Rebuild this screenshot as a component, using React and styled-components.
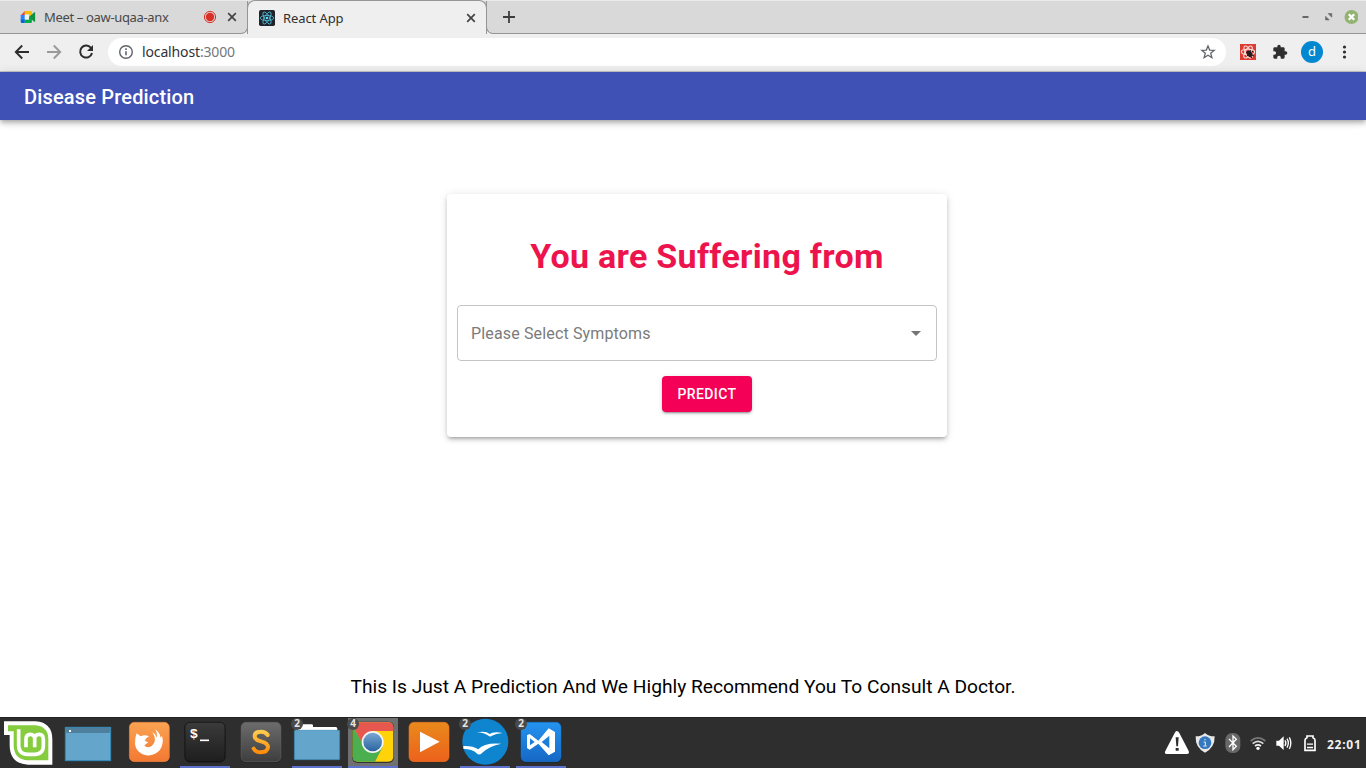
import React from "react";
import styled, { createGlobalStyle } from "styled-components";

const GlobalStyle = createGlobalStyle`
  *, *::before, *::after { box-sizing: border-box; }
  body { margin: 0; background: #fff; overflow: hidden; }
  svg { display: block; flex: none; }
`;

const uiFont = `"Noto Sans", "Open Sans", sans-serif`;

const Desktop = styled.div`
  width: 1366px;
  height: 768px;
  display: flex;
  flex-direction: column;
  background: #fff;
  font-family: Roboto, sans-serif;
`;

/* ---------- browser ---------- */
const TabStrip = styled.div`
  height: 34px;
  flex: none;
  display: flex;
  background: #d9d9d9;
  border-top: 1px solid #e9e9e9;
`;

const StripFill = styled.div`
  flex: ${(p) => (p.$grow ? 1 : "none")};
  display: flex;
  align-items: center;
  border: 0 solid #959595;
  border-bottom-width: 1px;
  border-left-width: ${(p) => (p.$grow ? "1px" : 0)};
  border-right-width: ${(p) => (p.$grow ? 0 : "1px")};
  border-bottom-left-radius: ${(p) => (p.$grow ? "7px" : 0)};
  border-bottom-right-radius: ${(p) => (p.$grow ? 0 : "7px")};
`;

const StripBack = styled.div`
  display: flex;
  background: #efefef;
  margin-left: ${(p) => (p.$grow ? "-1px" : 0)};
  flex: ${(p) => (p.$grow ? 1 : "none")};
  & > div { background: #d9d9d9; }
`;

const InactiveTab = styled(StripFill)`
  width: 248px;
  padding-left: 20px;
`;

const ActiveTab = styled.div`
  position: relative;
  width: 240px;
  margin: -1px 0 0 -1px;
  padding: 0 0 0 11px;
  display: flex;
  align-items: center;
  background: #efefef;
  border: 1px solid #959595;
  border-bottom: 0;
  border-radius: 8px 8px 0 0;
  clip-path: inset(0);
`;

const TabTitle = styled.span`
  font: 13px/18px ${uiFont};
  letter-spacing: ${(p) => p.$spacing || "0"};
  color: ${(p) => (p.$active ? "#303030" : "#494949")};
  width: ${(p) => p.$width}px;
  margin-left: 8px;
  white-space: nowrap;
`;

const WindowButtons = styled.div`
  margin-left: auto;
  display: flex;
  align-items: center;
  padding-right: 8px;
`;

const Toolbar = styled.div`
  height: 38px;
  flex: none;
  display: flex;
  align-items: center;
  background: #efefef;
  border-bottom: 1px solid #c5c5c5;
  padding: 0 0 1px 14px;
`;

const NavButtons = styled.div`
  display: flex;
  gap: 16px;
  width: 94px;
`;

const AddressBar = styled.div`
  width: 1118px;
  height: 28px;
  border-radius: 14px;
  background: #fff;
  display: flex;
  align-items: center;
  padding: 0 10px;
`;

const Address = styled.span`
  flex: 1;
  margin-left: 8px;
  font: 14px/20px ${uiFont};
  letter-spacing: -0.14px;
  color: #303235;
`;

const Port = styled.span`
  color: #74787c;
`;

const Actions = styled.div`
  flex: 1;
  display: flex;
  align-items: center;
  gap: 16px;
  padding-left: 14px;
`;

const Avatar = styled.div`
  width: 22px;
  height: 22px;
  margin: 0 -2px 0 -3px;
  border-radius: 50%;
  background: #0288d1;
  color: #fff;
  font: 13px/21px ${uiFont};
  text-align: center;
`;

/* ---------- application ---------- */
const AppBar = styled.header`
  height: 48px;
  flex: none;
  display: flex;
  align-items: center;
  padding: 2px 24px 0;
  background: #3f51b5;
  color: #fff;
  font-size: 20px;
  font-weight: 500;
  letter-spacing: 0.17px;
  box-shadow: 0 2px 4px -1px rgba(0, 0, 0, 0.2), 0 4px 5px rgba(0, 0, 0, 0.14), 0 1px 10px rgba(0, 0, 0, 0.12);
`;

const Page = styled.main`
  flex: 1;
  display: flex;
  flex-direction: column;
  align-items: center;
`;

const Card = styled.section`
  width: 500px;
  height: 243px;
  margin: 74px 0 0 28px;
  padding: 42px 10px 0;
  border-radius: 4px;
  background: #fff;
  box-shadow: 0 3px 3px -2px rgba(0, 0, 0, 0.2), 0 3px 4px rgba(0, 0, 0, 0.14), 0 1px 8px rgba(0, 0, 0, 0.12);
  display: flex;
  flex-direction: column;
`;

const Heading = styled.h1`
  margin: 0 0 29px 20px;
  height: 40px;
  line-height: 40px;
  font-size: 34px;
  font-weight: 700;
  letter-spacing: 0.28px;
  color: #ed144d;
  text-align: center;
  white-space: nowrap;
`;

const Select = styled.div`
  height: 56px;
  flex: none;
  border: 1px solid #c4c4c4;
  border-radius: 4px;
  display: flex;
  align-items: center;
  justify-content: space-between;
  padding: 0 8px 0 13px;
  font-size: 16px;
  letter-spacing: 0.15px;
  color: #7b7b7b;
`;

const PredictButton = styled.button`
  width: 90px;
  height: 36px;
  margin: 15px 0 0 205px;
  padding: 0;
  border: 0;
  border-radius: 4px;
  background: #f50057;
  color: #fff;
  font: 500 14px/24px Roboto, sans-serif;
  letter-spacing: 0.4px;
  box-shadow: 0 3px 1px -2px rgba(0, 0, 0, 0.2), 0 2px 2px rgba(0, 0, 0, 0.14), 0 1px 5px rgba(0, 0, 0, 0.12);
`;

const Disclaimer = styled.p`
  margin: auto 0 18px;
  font-size: 19.2px;
  line-height: 24px;
  color: #000;
`;

/* ---------- taskbar ---------- */
const Taskbar = styled.footer`
  height: 51px;
  flex: none;
  display: flex;
  background: #2e2e2e;
  border-top: 1px solid #242424;
`;

const Launchers = styled.div`
  display: flex;
  gap: 6px;
`;

const Launcher = styled.div`
  position: relative;
  width: ${(p) => p.$width || 50}px;
  margin-right: ${(p) => p.$after || 0}px;
  background: ${(p) => (p.$focused ? "#707070" : "transparent")};
  border-bottom: ${(p) => (p.$open ? "2px solid #5d72cc" : "0")};
  & > svg { margin-top: -1px; }
`;

const Count = styled.span`
  position: absolute;
  left: -1px;
  top: 0;
  width: 12px;
  height: 12px;
  border-radius: 50%;
  background: #4a4a4a;
  color: #e5e5e5;
  font: 700 10px/11px ${uiFont};
  text-align: center;
`;

const Tray = styled.div`
  margin-left: auto;
  display: flex;
`;

const Clock = styled.time`
  width: 39px;
  padding-top: 17px;
  color: #f2f2f2;
  font: 700 12px/20px ${uiFont};
  letter-spacing: 0.75px;
`;

const Close = () => (
  <svg width="10" height="10" viewBox="0 0 10 10" stroke="#444" strokeWidth="1.7">
    <path d="M1.2 1.2l7.6 7.6M8.8 1.2L1.2 8.8" />
  </svg>
);

const MeetLogo = () => (
  <svg width="16" height="16" viewBox="0 0 16 16">
    <path d="M.7 6.5L4.8 2v4.5z" fill="#ea4335" />
    <path d="M4.8 2h6.1q1 0 1 1v3.2L9 8V5.5H4.8z" fill="#fbbc04" />
    <path d="M.7 6h4.1v5H.7z" fill="#2684fc" />
    <path d="M.7 10.5h4.1V14H2q-1.3 0-1.3-1.3z" fill="#0066da" />
    <path d="M4.8 10.5H9V8l2.9-1.8V13q0 1-1 1H4.8z" fill="#00ac47" />
    <path d="M4.8 5.5H9v5H4.8z" fill="#eef2f3" />
    <path d="M9 8l5.2-4.7q.9-.5.9.5v8.4q0 1-.9.5z" fill="#13913f" />
  </svg>
);

const ReactLogo = () => (
  <svg width="16" height="16" viewBox="0 0 16 16">
    <rect width="16" height="16" rx="1.7" fill="#20232a" />
    <g fill="none" stroke="#52c1dc" strokeWidth=".8">
      <ellipse cx="8" cy="8" rx="6.8" ry="2.6" />
      <ellipse cx="8" cy="8" rx="6.8" ry="2.6" transform="rotate(60 8 8)" />
      <ellipse cx="8" cy="8" rx="6.8" ry="2.6" transform="rotate(120 8 8)" />
    </g>
    <circle cx="8" cy="8" r="1.3" fill="#61dafb" />
  </svg>
);

const DevtoolsIcon = () => (
  <svg width="16" height="16" viewBox="0 0 16 16">
    <rect width="16" height="16" fill="#dc3c31" />
    <g fill="none" stroke="#f8dcda" strokeWidth="1.1">
      <ellipse cx="8" cy="8" rx="6.7" ry="2.7" />
      <ellipse cx="8" cy="8" rx="6.7" ry="2.7" transform="rotate(60 8 8)" />
      <ellipse cx="8" cy="8" rx="6.7" ry="2.7" transform="rotate(120 8 8)" />
    </g>
    <ellipse cx="9.5" cy="9.8" rx="2.5" ry="3.5" transform="rotate(-35 9.5 9.8)" fill="#251b1a" />
    <path d="M6 8l2 1M7 12l1-1M10 6l1 2M12 8l1-1M12 11l2 1M10 12l2 2" stroke="#251b1a" />
  </svg>
);

/* Dock drawings are on a grid of three units per pixel. */
const Dock = ({ x, width = 50, children }) => (
  <svg width={width} height="51" viewBox={`${x} 21 ${width * 3} 153`}>{children}</svg>
);

const Tile = ({ x, fill, edge }) => (
  <g>
    <rect x={x - 1} y="36" width="124" height="122" rx="17" fill="#181818" opacity=".65" />
    <rect x={x + 1} y="37" width="120" height="118" rx="15" fill={fill} stroke={edge} strokeWidth="2" />
  </g>
);

const Gradient = ({ id, from, to }) => (
  <linearGradient id={id} x1="0" y1="0" x2="0" y2="1">
    <stop stopColor={from} />
    <stop offset="1" stopColor={to} />
  </linearGradient>
);

const Gradients = () => (
  <defs>
    <Gradient id="orange" from="#fba352" to="#f37932" />
    <Gradient id="black" from="#3b3b3b" to="#1e1e1e" />
    <Gradient id="gray" from="#6c6c6c" to="#3e3e3e" />
    <Gradient id="gold" from="#ffca4c" to="#ff8d0b" />
    <Gradient id="play" from="#e98a1c" to="#ed611c" />
    <Gradient id="code" from="#2494ef" to="#1767c5" />
    <Gradient id="globe" from="#78a7d4" to="#2a649f" />
  </defs>
);

const BrowserChrome = () => (
  <>
    <TabStrip>
      <StripBack>
        <InactiveTab>
          <MeetLogo />
          <TabTitle $width={159} $spacing="-0.34px">Meet – oaw-uqaa-anx</TabTitle>
          <svg width="24" height="14" viewBox="0 0 24 14">
            <circle cx="7" cy="7" r="5.6" fill="none" stroke="#d93025" strokeWidth="1" />
            <circle cx="7" cy="7" r="4.2" fill="#d93025" />
          </svg>
          <Close />
        </InactiveTab>
      </StripBack>
      <ActiveTab>
        <ReactLogo />
        <TabTitle $active $width={183} $spacing="-0.1px">React App</TabTitle>
        <Close />
      </ActiveTab>
      <StripBack $grow>
        <StripFill $grow>
          <svg width="44" height="14" viewBox="0 0 44 14" stroke="#3d3d3d" strokeWidth="1.8">
            <path d="M22 1v12M16 7h12" />
          </svg>
          <WindowButtons>
            <svg width="60" height="16" viewBox="0 0 60 16">
              <path d="M4.5 8h6" stroke="#666" strokeWidth="2" />
              <path d="M30 4.5h3.8v3.8zM27.5 7.2v3.8h3.8z" fill="#666" stroke="#666" strokeWidth=".5" />
              <circle cx="53.5" cy="8" r="7" fill="#92b372" />
              <path d="M50.8 5.3l5.4 5.4m0-5.4l-5.4 5.4" stroke="#fff" strokeWidth="2.3" />
            </svg>
          </WindowButtons>
        </StripFill>
      </StripBack>
    </TabStrip>
    <Toolbar>
      <NavButtons>
        <svg width="16" height="16" viewBox="0 0 16 16" fill="none" stroke="#2d2d2d" strokeWidth="1.9">
          <path d="M15 8H2M8.2 1.5L1.8 8l6.4 6.5" />
        </svg>
        <svg width="16" height="16" viewBox="0 0 16 16" fill="none" stroke="#999" strokeWidth="1.9">
          <path d="M1 8h13M7.8 1.5L14.2 8l-6.4 6.5" />
        </svg>
        <svg width="16" height="16" viewBox="0 0 16 16" fill="none" stroke="#2d2d2d" strokeWidth="2">
          <path d="M13.2 4.3A6 6 0 1 0 14 9" />
          <path d="M15 1v6H9z" fill="#2d2d2d" stroke="none" />
        </svg>
      </NavButtons>
      <AddressBar>
        <svg width="16" height="16" viewBox="0 0 16 16" fill="none" stroke="#5f6368" strokeWidth="1.4">
          <circle cx="8" cy="8" r="6.3" />
          <path d="M8 7.2v4.1M8 4.3v1.6" strokeWidth="1.6" />
        </svg>
        <Address>localhost<Port>:3000</Port></Address>
        <svg width="16" height="16" viewBox="0 0 16 16" fill="none" stroke="#5f6368" strokeWidth="1.3">
          <path d="M8 1.9l1.7 4.2 4.5.3-3.5 2.9 1.2 4.4L8 11.3l-3.9 2.4 1.2-4.4-3.5-2.9 4.5-.3z" />
        </svg>
      </AddressBar>
      <Actions>
        <DevtoolsIcon />
        <svg width="16" height="16" viewBox="0 0 24 24" fill="#2f2f2f">
          <path d="M20.5 11H19V7c0-1.1-.9-2-2-2h-4V3.5a2.5 2.5 0 0 0-5 0V5H4c-1.1 0-2 .9-2 2v3.8h1.5a2.7 2.7 0 0 1 0 5.4H2V20c0 1.1.9 2 2 2h3.8v-1.5a2.7 2.7 0 0 1 5.4 0V22H17c1.1 0 2-.9 2-2v-4h1.5a2.5 2.5 0 0 0 0-5z" />
        </svg>
        <Avatar>d</Avatar>
        <svg width="16" height="16" viewBox="0 0 16 16" fill="#2d2d2d">
          <circle cx="7.5" cy="3" r="1.6" /><circle cx="7.5" cy="8" r="1.6" /><circle cx="7.5" cy="13" r="1.6" />
        </svg>
      </Actions>
    </Toolbar>
  </>
);

const DockBar = () => (
  <Taskbar>
    <Launchers>
      <Launcher $width={57}>
        <Dock x={0} width={57}>
          <Gradients />
          <path d="M12 34H107Q157 38 157 88V164H84Q29 161 29 105V75H12Z" fill="#fff" />
          <path d="M24 46H106Q145 50 145 88V151H84Q41 149 41 105V64H24Z" fill="#85cd3f" />
          <path d="M56 58V106Q56 133 83 133H107Q130 131 130 109V88Q130 73 117 73Q104 73 104 87V112M104 87Q104 73 91 73Q78 73 78 87V112" fill="none" stroke="#fff" strokeWidth="11" />
        </Dock>
      </Launcher>
      <Launcher $width={50} $after={5}>
        <Dock x={189}>
          <rect x="196" y="52" width="136" height="100" fill="#64a5cb" stroke="#318cba" strokeWidth="3" />
          <path d="M197 53h134v11q0 5-6 5H203q-6 0-6-5z" fill="#4e7f9c" />
          <rect x="207" y="60" width="6" height="6" fill="#fff" />
        </Dock>
      </Launcher>
      <Launcher>
        <Dock x={372}>
          <Tile x={387} fill="url(#orange)" edge="#e98448" />
          <path d="M410 70L422 79Q434 73 447 79Q437 84 434 92L445 97L433 106Q441 117 456 107Q473 91 457 66Q468 72 471 83Q473 70 466 58Q480 69 482 83L486 77Q493 101 479 121Q463 139 438 136Q408 129 405 103Q404 84 410 70Z" fill="#fff" />
        </Dock>
      </Launcher>
      <Launcher $open>
        <Dock x={12}>
          <Tile x={26} fill="url(#black)" edge="#111" />
          <text x="41" y="84" fontFamily="Liberation Mono" fontWeight="700" fontSize="41" fill="#fff">$</text>
          <path d="M72 91h27" stroke="#fff" strokeWidth="5" />
        </Dock>
      </Launcher>
      <Launcher>
        <Dock x={180}>
          <Tile x={194} fill="url(#gray)" edge="#626262" />
          <path d="M275 75Q268 65 255 65Q236 65 236 79Q236 89 255 94Q276 99 276 112Q274 127 254 127Q239 127 233 116" fill="none" stroke="url(#gold)" strokeWidth="12" strokeLinecap="round" />
        </Dock>
      </Launcher>
      <Launcher $open>
        <Dock x={348}>
          <path d="M359 62V43h48q4 0 4 4v4h68q5 0 5 5v10H359z" fill="#fff" />
          <rect x="355" y="61" width="136" height="88" rx="2" fill="#64a5cb" stroke="#3389b4" strokeWidth="2" />
        </Dock>
        <Count>2</Count>
      </Launcher>
      <Launcher $open $focused>
        <Dock x={24}>
          <clipPath id="chromeTile"><rect x="38" y="37" width="122" height="118" rx="15" /></clipPath>
          <rect x="36" y="35" width="126" height="124" rx="17" fill="#333" />
          <g clipPath="url(#chromeTile)">
            <path d="M36 35h128v125H36z" fill="#ffd20a" />
            <path d="M36 44L80 121L128 111L103 159H36z" fill="#4baf4f" />
            <path d="M36 35h126v28H98L66 98L38 48z" fill="#e65750" />
          </g>
          <circle cx="98" cy="96" r="33" fill="#f5f5f5" />
          <circle cx="98" cy="96" r="28" fill="url(#globe)" />
        </Dock>
        <Count>4</Count>
      </Launcher>
      <Launcher>
        <Dock x={192}>
          <Tile x={206} fill="url(#play)" edge="#ef7622" />
          <path d="M240 65L299 95L240 127z" fill="#fff" />
        </Dock>
      </Launcher>
      <Launcher $open>
        <Dock x={360}>
          <circle cx="436" cy="95" r="69" fill="#0f85d0" />
          <path d="M410 67Q438 61 449 72Q460 64 488 69Q467 71 454 78Q452 81 447 78Q432 68 410 67ZM370 108Q399 107 415 118Q433 97 484 101Q447 108 426 129Q417 138 409 129Q397 117 370 116Z" fill="#fff" />
        </Dock>
        <Count>2</Count>
      </Launcher>
      <Launcher $open>
        <Dock x={528}>
          <Tile x={542} fill="url(#code)" edge="#1779cf" />
          <path d="M561 76L569 72L595 92L626 55L645 66V125L626 136L595 101L569 119L561 114ZM570 85V106L584 96ZM628 77L605 96L628 115Z" fill="#fff" fillRule="evenodd" />
        </Dock>
        <Count>2</Count>
      </Launcher>
    </Launchers>
    <Tray>
      <svg width="165" height="51" viewBox="36 21 495 153" style={{ marginTop: -1 }}>
        <path d="M80 63Q85 63 88 69L116 123Q119 132 111 132H50Q42 132 46 123L74 69Q77 63 80 63z" fill="#fff" />
        <path d="M77 82h9l-2 27h-5zM77 114h9v8h-9z" fill="#2e2e2e" />
        <path d="M165 69Q177 80 194 79Q195 113 165 128Q135 113 137 79Q153 80 165 69z" fill="#e8e8e8" />
        <circle cx="165" cy="98" r="19" fill="#3479bf" />
        <path d="M165 87v4M161 96h5v11M160 108h10" stroke="#eee" strokeWidth="3" fill="none" />
        <rect x="226" y="69" width="45" height="60" rx="20" fill="#686868" />
        <path d="M237 87L259 109L249 119V78L259 88L237 111" fill="none" stroke="#fff" strokeWidth="4" />
        <g fill="none" strokeWidth="5">
          <path d="M302 93Q324 74 346 93" stroke="#777" />
          <path d="M308 101Q324 87 340 101" stroke="#ddd" />
          <path d="M315 108Q324 101 333 108" stroke="#f1f1f1" />
        </g>
        <circle cx="324" cy="115" r="5" fill="#fff" />
        <path d="M379 92h8l14-13v41l-14-13h-8z" fill="#fff" />
        <path d="M405 91Q410 99 405 108M411 86Q419 99 411 113M418 82Q427 99 418 117" fill="none" stroke="#fff" strokeWidth="4" />
        <path d="M471 78v5q-6 2-6 8v30h30V91q0-6-6-8v-5z" fill="none" stroke="#fff" strokeWidth="5" />
        <path d="M471 102.500h18M471 112.500h18" stroke="#fff" strokeWidth="4" />
      </svg>
      <Clock>22:01</Clock>
    </Tray>
  </Taskbar>
);

export default function App() {
  return (
    <Desktop>
      <GlobalStyle />
      <BrowserChrome />
      <AppBar>Disease Prediction</AppBar>
      <Page>
        <Card>
          <Heading>You are Suffering from</Heading>
          <Select>
            <span>Please Select Symptoms</span>
            <svg width="24" height="24" viewBox="0 0 24 24" fill="#757575"><path d="M7 10l5 5 5-5z" /></svg>
          </Select>
          <PredictButton>PREDICT</PredictButton>
        </Card>
        <Disclaimer>This Is Just A Prediction And We Highly Recommend You To Consult A Doctor.</Disclaimer>
      </Page>
      <DockBar />
    </Desktop>
  );
}
